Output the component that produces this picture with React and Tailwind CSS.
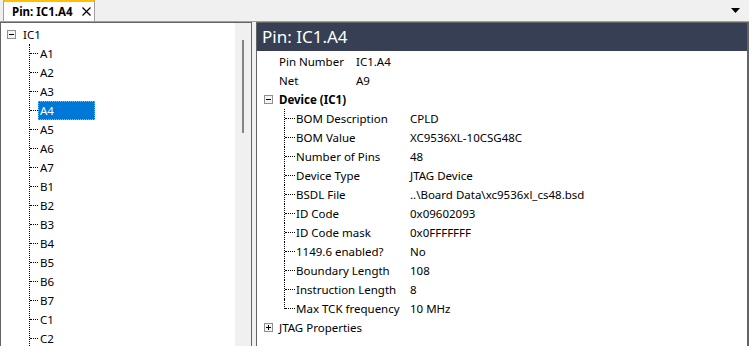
import React from "react";

const pins = ["A1", "A2", "A3", "A4", "A5", "A6", "A7", "B1", "B2", "B3", "B4", "B5", "B6", "B7", "C1", "C2"];

const device = [
  ["BOM Description", "CPLD"],
  ["BOM Value", "XC9536XL-10CSG48C"],
  ["Number of Pins", "48"],
  ["Device Type", "JTAG Device"],
  ["BSDL File", "..\\Board Data\\xc9536xl_cs48.bsd"],
  ["ID Code", "0x09602093"],
  ["ID Code mask", "0x0FFFFFFF"],
  ["1149.6 enabled?", "No"],
  ["Boundary Length", "108"],
  ["Instruction Length", "8"],
  ["Max TCK frequency", "10 MHz"],
];

function ExpandBox({ open }) {
  return (
    <svg width="9" height="9" viewBox="0 0 9 9" className="shrink-0">
      <rect x="0.5" y="0.5" width="8" height="8" fill="#f4f4f4" stroke="#8f8f8f" />
      <line x1="2" y1="4.5" x2="7" y2="4.5" stroke="#000" />
      {!open && <line x1="4.5" y1="2" x2="4.5" y2="7" stroke="#000" />}
    </svg>
  );
}

export default function App() {
  return (
    <div className="w-[749px] h-[346px] bg-[#f0f0f0] flex flex-col overflow-hidden font-['Noto_Sans',sans-serif] text-[11.5px] text-black">
      {/* tab strip */}
      <div className="h-[22px] flex items-end justify-between border-b border-[#a0a0a0] shrink-0">
        <div className="ml-[3px] w-[92px] h-[22px] bg-white border-x border-[#a0a0a0] border-t-[3px] border-t-[#ffc000] flex items-center pl-[8px] gap-[10px] whitespace-nowrap">
          <span className="font-bold leading-none">Pin: IC1.A4</span>
          <svg width="9" height="9" viewBox="0 0 9 9" className="shrink-0">
            <path d="M0.5 0.5L8.5 8.5M8.5 0.5L0.5 8.5" stroke="#000" strokeWidth="1.2" />
          </svg>
        </div>
        <svg width="9" height="5" viewBox="0 0 9 5" className="mr-[9px] mb-[8px]">
          <path d="M0 0H9L4.5 5Z" fill="#000" />
        </svg>
      </div>

      <div className="flex-1 flex gap-[4px]">
        {/* left tree */}
        <div className="w-[252px] h-full bg-white border border-[#646464] flex">
          <div className="flex-1 pt-[2px]">
            <div className="h-[19px] flex items-center pl-[6px] gap-[7px]">
              <ExpandBox open />
              <span>IC1</span>
            </div>
            <div className="ml-[28px] border-l border-dotted border-black">
              {pins.map((p) => (
                <div key={p} className="h-[19px] flex items-center whitespace-nowrap">
                  <div className="w-[8px] border-t border-dotted border-black" />
                  {p === "A4" ? (
                    <span className="w-[57px] h-[19px] bg-[#0078d7] text-white border border-dotted border-[#f5a05a] flex items-center pl-[1px]">
                      {p}
                    </span>
                  ) : (
                    <span className="pl-[2px]">{p}</span>
                  )}
                </div>
              ))}
            </div>
          </div>
          <div className="w-[16px] bg-[#f0f0f0] flex justify-center pt-[17px]">
            <div className="w-[2px] h-[93px] bg-[#858585]" />
          </div>
        </div>

        {/* right properties */}
        <div className="flex-1 h-full bg-white border border-[#646464] border-r-2 flex flex-col">
          <div className="h-[28px] bg-[#363f54] text-white text-[17px] flex items-center pl-[5px] shrink-0">
            Pin: IC1.A4
          </div>
          <div className="flex flex-col pt-[1px] whitespace-nowrap">
            <div className="h-[19px] flex items-center pl-[22px]">
              <span className="w-[77px]">Pin Number</span>
              <span>IC1.A4</span>
            </div>
            <div className="h-[19px] flex items-center pl-[22px]">
              <span className="w-[77px]">Net</span>
              <span>A9</span>
            </div>
            <div className="h-[19px] flex items-center pl-[7px] gap-[6px]">
              <ExpandBox open />
              <span className="font-bold">Device (IC1)</span>
            </div>
            <div className="ml-[27px]">
              {device.map(([k, v], i) => (
                <div key={k} className="h-[19px] flex items-center relative">
                  <div
                    className={
                      i === device.length - 1
                        ? "absolute left-0 top-0 h-[10px] border-l border-dotted border-black"
                        : "absolute left-0 top-0 h-[19px] border-l border-dotted border-black"
                    }
                  />
                  <div className="w-[10px] ml-[1px] border-t border-dotted border-black" />
                  <span className="w-[115px] pl-[1px]">{k}</span>
                  <span>{v}</span>
                </div>
              ))}
            </div>
            <div className="h-[19px] flex items-center pl-[7px] gap-[6px]">
              <ExpandBox open={false} />
              <span>JTAG Properties</span>
            </div>
          </div>
        </div>
      </div>
    </div>
  );
}
